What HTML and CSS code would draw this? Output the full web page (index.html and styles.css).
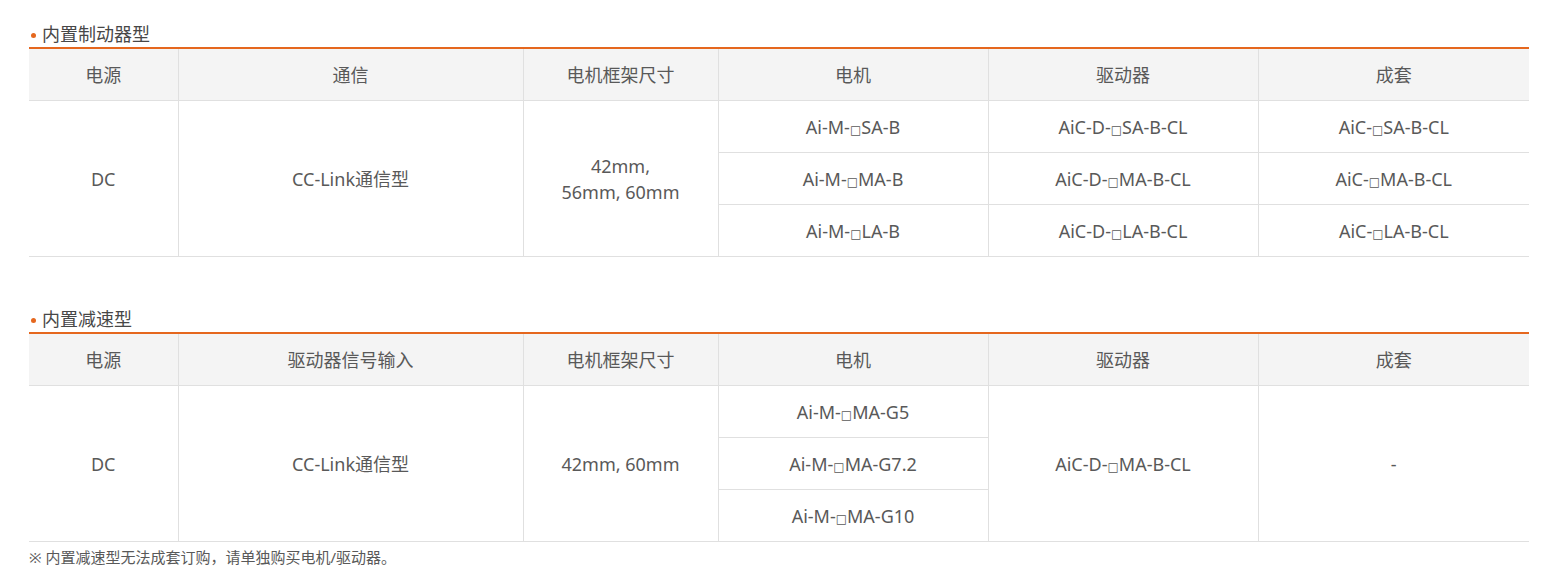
FILE: index.html
```html
<!DOCTYPE html>
<html lang="zh">
<head>
<meta charset="utf-8">
<link rel="stylesheet" href="styles.css">
</head>
<body>
<div class="page">
  <section class="block first">
    <h3 class="title"><span class="dot"></span>内置制动器型</h3>
    <table class="spec">
      <colgroup>
        <col class="c1"><col class="c2"><col class="c3"><col class="c4"><col class="c5"><col class="c6">
      </colgroup>
      <thead>
        <tr><th>电源</th><th>通信</th><th>电机框架尺寸</th><th>电机</th><th>驱动器</th><th>成套</th></tr>
      </thead>
      <tbody>
        <tr>
          <td rowspan="3">DC</td>
          <td rowspan="3">CC-Link通信型</td>
          <td rowspan="3">42mm,<br>56mm, 60mm</td>
          <td>Ai-M-<span class="sq">□</span>SA-B</td><td>AiC-D-<span class="sq">□</span>SA-B-CL</td><td>AiC-<span class="sq">□</span>SA-B-CL</td>
        </tr>
        <tr><td>Ai-M-<span class="sq">□</span>MA-B</td><td>AiC-D-<span class="sq">□</span>MA-B-CL</td><td>AiC-<span class="sq">□</span>MA-B-CL</td></tr>
        <tr><td>Ai-M-<span class="sq">□</span>LA-B</td><td>AiC-D-<span class="sq">□</span>LA-B-CL</td><td>AiC-<span class="sq">□</span>LA-B-CL</td></tr>
      </tbody>
    </table>
  </section>
  <section class="block second">
    <h3 class="title"><span class="dot"></span>内置减速型</h3>
    <table class="spec">
      <colgroup>
        <col class="c1"><col class="c2"><col class="c3"><col class="c4"><col class="c5"><col class="c6">
      </colgroup>
      <thead>
        <tr><th>电源</th><th>驱动器信号输入</th><th>电机框架尺寸</th><th>电机</th><th>驱动器</th><th>成套</th></tr>
      </thead>
      <tbody>
        <tr>
          <td rowspan="3">DC</td>
          <td rowspan="3">CC-Link通信型</td>
          <td rowspan="3">42mm, 60mm</td>
          <td>Ai-M-<span class="sq">□</span>MA-G5</td>
          <td rowspan="3">AiC-D-<span class="sq">□</span>MA-B-CL</td>
          <td rowspan="3">-</td>
        </tr>
        <tr><td>Ai-M-<span class="sq">□</span>MA-G7.2</td></tr>
        <tr><td>Ai-M-<span class="sq">□</span>MA-G10</td></tr>
      </tbody>
    </table>
    <p class="note">※ 内置减速型无法成套订购，请单独购买电机/驱动器。</p>
  </section>
</div>
</body>
</html>
```
FILE: styles.css
```css
html, body {
  margin: 0;
  padding: 0;
  background: #fff;
}
body {
  font-family: "Noto Sans", "Noto Sans CJK SC", sans-serif;
  color: #595959;
}
.page {
  width: 1500px;
  padding: 23px 0 0 29px;
}
.block.second {
  margin-top: 51px;
}
.title {
  margin: 0;
  font-size: 18px;
  font-weight: normal;
  line-height: 22px;
  padding-bottom: 2px;
  color: #474747;
  display: flex;
  align-items: center;
}
.dot {
  width: 5px;
  height: 5px;
  border-radius: 50%;
  background: #e5671e;
  margin: 2px 6px 0 2px;
}
.spec {
  width: 1500px;
  border-collapse: collapse;
  table-layout: fixed;
  border-top: 2px solid #e5671e;
}
.c1 { width: 149px; }
.c2 { width: 345px; }
.c3 { width: 195px; }
.c4 { width: 270px; }
.c5 { width: 270px; }
.c6 { width: 271px; }
.spec th, .spec td {
  border: 1px solid #e0e0e0;
  text-align: center;
  vertical-align: middle;
  font-size: 18px;
  font-weight: normal;
  line-height: 26px;
  padding: 0;
  color: #595959;
}
.spec th {
  height: 51px;
  background: #f4f4f4;
  border-top: none;
}
.spec td {
  height: 51px;
}
.sq {
  font-family: "DejaVu Sans", sans-serif;
  font-size: 12px;
  line-height: 1;
}
.spec tr > :first-child { border-left: none; }
.spec tr > :last-child { border-right: none; }
.note {
  margin: 5px 0 0;
  font-size: 15px;
  line-height: 20px;
  color: #595959;
}
```
